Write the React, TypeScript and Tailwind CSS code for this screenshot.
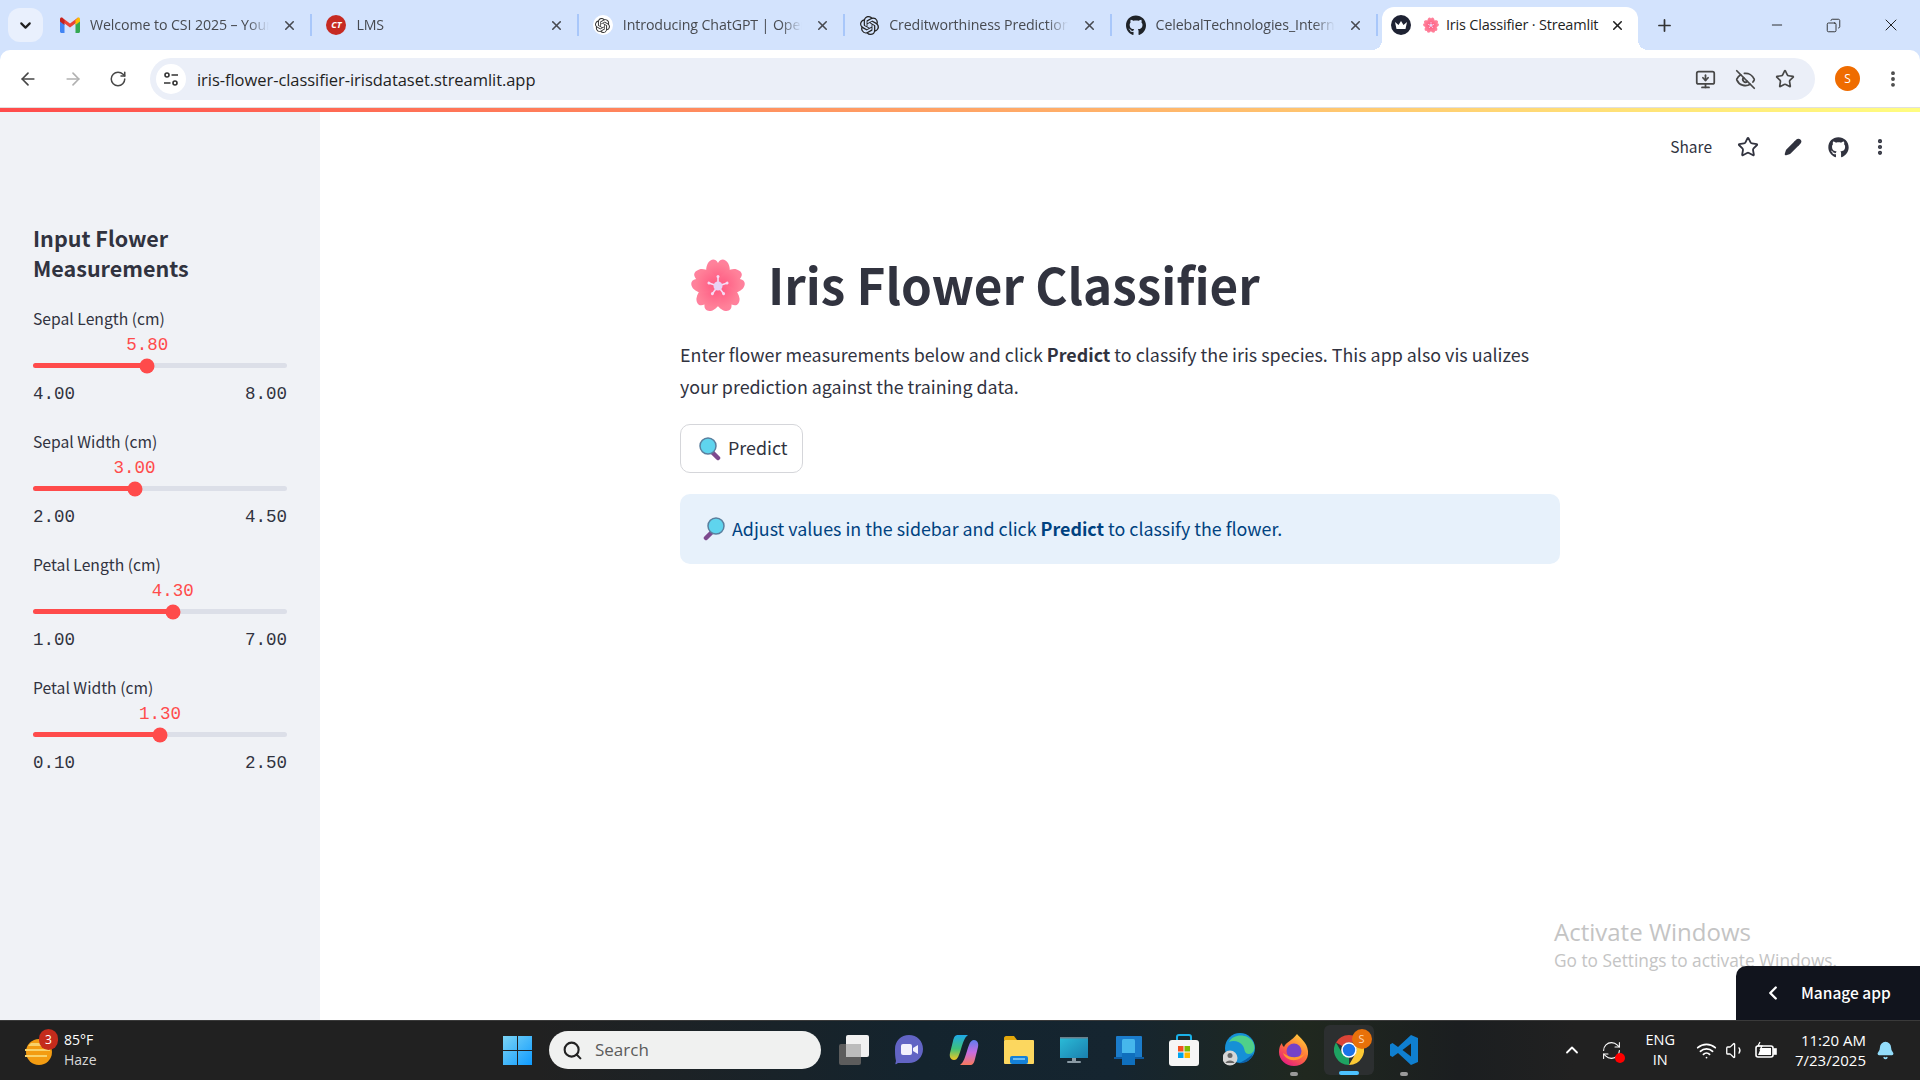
import React from 'react';
import { ChevronDown, X, ArrowLeft, ArrowRight, RotateCw, Star, Plus, Minus, EllipsisVertical, Pencil, EyeOff, MonitorDown, ChevronLeft, ChevronUp, Wifi, Volume1, Bell, RefreshCw, Search, Copy } from 'lucide-react';
import { FaGithub } from 'react-icons/fa';
import { SiOpenai } from 'react-icons/si';

const sans = 'font-["Noto_Sans_CJK_SC","Noto_Sans",sans-serif]';
const ui = 'font-["Open_Sans","Noto_Sans",sans-serif]';

const SLIDERS = [
  { label: 'Sepal Length (cm)', value: '5.80', min: '4.00', max: '8.00', pct: 45 },
  { label: 'Sepal Width (cm)', value: '3.00', min: '2.00', max: '4.50', pct: 40 },
  { label: 'Petal Length (cm)', value: '4.30', min: '1.00', max: '7.00', pct: 55 },
  { label: 'Petal Width (cm)', value: '1.30', min: '0.10', max: '2.50', pct: 50 },
];

function Flower({ size, id }: { size: number; id: string }) {
  return (
    <svg width={size} height={size} viewBox="0 0 54 54">
      <defs>
        <radialGradient id={id} gradientUnits="userSpaceOnUse" cx="27" cy="24" r="31">
          <stop offset="0" stopColor="#ff5a82" />
          <stop offset="0.6" stopColor="#ff8199" />
          <stop offset="0.9" stopColor="#ff7fa8" />
          <stop offset="1" stopColor="#ff6fd8" />
        </radialGradient>
      </defs>
      {[0, 72, 144, 216, 288].map((a) => (
        <path
          key={a}
          transform={`rotate(${a} 27 28)`}
          fill={`url(#${id})`}
          d="M27 30C18 25 12 14 17 5C20 1 24 0 27 5C30 0 34 1 37 5C42 14 36 25 27 30Z"
        />
      ))}
      <g stroke="#f6dcf6" strokeWidth="1.6" strokeLinecap="round">
        {[0, 72, 144, 216, 288].map((a) => (
          <g key={a} transform={`rotate(${a} 27 28)`}>
            <line x1="27" y1="28" x2="27" y2="19" />
            <circle cx="27" cy="18.5" r="1.5" fill="#f6dcf6" stroke="none" />
          </g>
        ))}
      </g>
      <circle cx="27" cy="28" r="4.5" fill="#e8d2f5" />
    </svg>
  );
}

function Magnifier({ flip }: { flip?: boolean }) {
  return (
    <svg width="22" height="24" viewBox="0 0 22 24" className={flip ? '-scale-x-100' : ''}>
      <path d="M13 15L19 21" stroke="#7d4a8e" strokeWidth="4.5" strokeLinecap="round" />
      <circle cx="9" cy="9" r="8" fill="#5fd4ee" stroke="#5a7f9e" strokeWidth="1.5" />
    </svg>
  );
}

function Gmail() {
  return (
    <svg width="20" height="16" viewBox="0 0 20 16">
      <path d="M0 3V14.5C0 15.3.7 16 1.5 16H4.5V7Z" fill="#4285f4" />
      <path d="M15.5 7V16H18.5C19.3 16 20 15.3 20 14.5V3Z" fill="#34a853" />
      <path d="M0 3L10 10.5L20 3L18 .5L10 6.5L2 .5Z" fill="#ea4335" />
      <path d="M15.5 3.2V8L20 4.5V2C20 .5 18.5 0 17.5 .9Z" fill="#fbbc04" />
      <path d="M4.5 3.2V8L0 4.5V2C0 .5 1.5 0 2.5 .9Z" fill="#c5221f" />
    </svg>
  );
}

function StreamlitCrown() {
  return (
    <svg width="20" height="20" viewBox="0 0 20 20">
      <circle cx="10" cy="10" r="10" fill="#1e2233" />
      <path d="M4 7L7.5 10L10 6L12.5 10L16 7L14.5 14H5.5Z" fill="#fff" />
    </svg>
  );
}

function Tab({ icon, title }: { icon: React.ReactNode; title: string }) {
  return (
    <div className="relative flex h-full w-[266.4px] shrink-0 items-center pl-[14px] pr-[15px]">
      <div className="flex w-5 shrink-0 justify-center">{icon}</div>
      <div className={`ml-[10px] w-[179px] overflow-hidden whitespace-nowrap text-[14.2px] tracking-[-0.1px] text-[#474a50] [mask-image:linear-gradient(90deg,#000_88%,transparent)] ${ui}`}>{title}</div>
      <X size={15} strokeWidth={2.5} className="ml-auto text-[#474a50]" />
      <div className="absolute right-0 top-[14px] h-[22px] w-[2px] bg-[#a8c7fa]" />
    </div>
  );
}

function TabStrip() {
  return (
    <div className="flex h-[50px] items-end bg-[#d3e3fd] pl-[8px]">
      <div className="mb-[8px] mr-[3px] flex h-[34px] w-[35px] items-center justify-center rounded-xl bg-[#e9f0fd]">
        <ChevronDown size={17} strokeWidth={3} className="text-[#1f1f1f]" />
      </div>
      <div className="flex h-[50px] items-center">
        <Tab icon={<Gmail />} title="Welcome to CSI 2025 – Your" />
        <Tab
          icon={<div className="flex h-5 w-5 items-center justify-center rounded-full bg-[#c62a22] text-[9px] font-bold italic text-white">CT</div>}
          title="LMS"
        />
        <Tab
          icon={<div className="flex h-5 w-5 items-center justify-center rounded-full bg-white"><SiOpenai size={15} className="text-[#333]" /></div>}
          title="Introducing ChatGPT | OpenAI"
        />
        <Tab icon={<SiOpenai size={19} className="text-[#222]" />} title="Creditworthiness Prediction" />
        <Tab icon={<FaGithub size={21} className="text-[#1f2328]" />} title="CelebalTechnologies_Internship" />
      </div>
      <div className="relative ml-[4px] flex h-[43px] w-[256px] items-center rounded-t-xl bg-white pb-[7px] pl-[9px] pr-[13px]">
        <span className="absolute bottom-0 left-[-10px] h-[10px] w-[10px] bg-[radial-gradient(circle_at_0_0,transparent_10px,white_10px)]" />
        <span className="absolute bottom-0 right-[-10px] h-[10px] w-[10px] bg-[radial-gradient(circle_at_100%_0,transparent_10px,white_10px)]" />
        <StreamlitCrown />
        <div className="ml-[12px]"><Flower size={16} id="tabflower" /></div>
        <span className={`ml-[7px] whitespace-nowrap text-[14.5px] tracking-[-0.2px] text-[#1f1f1f] ${ui}`}>Iris Classifier · Streamlit</span>
        <X size={15} strokeWidth={2.5} className="ml-auto text-[#1f1f1f]" />
      </div>
      <div className="flex h-[50px] w-[54px] items-center justify-center">
        <Plus size={19} strokeWidth={2.2} className="text-[#333]" />
      </div>
      <div className="ml-auto flex h-[50px] items-center pr-[1px]">
        <div className="flex w-[57px] justify-center"><Minus size={16} strokeWidth={1.4} className="text-[#222]" /></div>
        <div className="flex w-[57px] justify-center"><Copy size={15} strokeWidth={1.4} className="-scale-x-100 text-[#222]" /></div>
        <div className="flex w-[57px] justify-center"><X size={20} strokeWidth={1.2} className="text-[#222]" /></div>
      </div>
    </div>
  );
}

function Toolbar() {
  return (
    <div className="flex h-[57px] items-start rounded-t-[10px] bg-white pl-[5px] pt-[8px]">
      <div className="flex h-[42px] w-[45px] items-center justify-center"><ArrowLeft size={20} className="text-[#474747]" /></div>
      <div className="flex h-[42px] w-[45px] items-center justify-center"><ArrowRight size={20} className="text-[#b1b1b1]" /></div>
      <div className="flex h-[42px] w-[45px] items-center justify-center"><RotateCw size={18} className="text-[#474747]" /></div>
      <div className="ml-[10px] flex h-[42px] w-[1665px] items-center rounded-full bg-[#ebeff8] pl-[6px] pr-[20px]">
        <div className="flex h-[30px] w-[30px] items-center justify-center rounded-full bg-white">
          <svg width="16" height="16" viewBox="0 0 16 16" fill="none" stroke="#333" strokeWidth="1.6">
            <circle cx="4" cy="4" r="2" />
            <path d="M8.5 4H15M1 12H7.5" />
            <circle cx="12" cy="12" r="2" />
          </svg>
        </div>
        <span className={`ml-[11px] translate-y-[1px] text-[16.5px] tracking-[-0.05px] text-[#1f1f1f] ${ui}`}>iris-flower-classifier-irisdataset.streamlit.app</span>
        <div className="ml-auto flex items-center gap-[19px]">
          <MonitorDown size={21} className="text-[#474747]" />
          <EyeOff size={21} className="text-[#474747]" />
          <Star size={20} className="text-[#474747]" />
        </div>
      </div>
      <div className={`ml-[20px] flex h-[25px] w-[25px] translate-y-[8px] items-center justify-center rounded-full bg-[#ef6c00] text-[12px] text-white ${ui}`}>S</div>
      <EllipsisVertical size={20} strokeWidth={2.6} className="ml-[23px] translate-y-[11px] text-[#474747]" />
    </div>
  );
}

function RangeSlider({ label, value, min, max, pct }: (typeof SLIDERS)[number]) {
  return (
    <div className="mb-[24px]">
      <div className={`h-6 text-[15.7px] leading-6 text-[#31333f] ${sans}`}>{label}</div>
      <div className="relative mt-[2px] h-6">
        <span
          className='absolute -translate-x-1/2 font-["Liberation_Mono",monospace] text-[17.5px] leading-6 text-[#ff4b4b]'
          style={{ left: `${pct}%` }}
        >
          {value}
        </span>
      </div>
      <div className="relative mt-[6px] h-[5px] rounded-full bg-[#dcdfe8]">
        <div className="h-full rounded-full bg-[#ff4b4b]" style={{ width: `${pct}%` }} />
        <div
          className="absolute top-1/2 h-[15px] w-[15px] -translate-x-1/2 -translate-y-1/2 rounded-full bg-[#ff4b4b]"
          style={{ left: `${pct}%` }}
        />
      </div>
      <div className='mt-[14px] flex h-6 justify-between font-["Liberation_Mono",monospace] text-[17.5px] leading-6 text-[#31333f]'>
        <span>{min}</span>
        <span>{max}</span>
      </div>
    </div>
  );
}

function Sidebar() {
  return (
    <aside className="w-[320px] shrink-0 bg-[#f0f2f6] px-[33px] pt-[111px]">
      <h2 className={`mb-[24px] text-[21.5px] font-semibold leading-[30px] text-[#31333f] ${sans}`}>
        Input Flower<br />Measurements
      </h2>
      {SLIDERS.map((s) => (
        <RangeSlider key={s.label} {...s} />
      ))}
    </aside>
  );
}

function MainPanel() {
  return (
    <main className={`relative flex-1 bg-white ${sans}`}>
      <div className="flex h-[70px] items-center justify-end pr-[30px] text-[#31333f]">
        <span className="mr-[25px] text-[15.5px]">Share</span>
        <Star size={22} strokeWidth={2} className="mr-[25px]" />
        <Pencil size={18} fill="#31333f" className="mr-[26px]" />
        <FaGithub size={21} className="mr-[21px]" />
        <EllipsisVertical size={20} strokeWidth={3} />
      </div>
      <div className="ml-[360px] mt-[61px] w-[880px]">
        <div className="flex h-[84px] items-center pl-[11px]">
          <Flower size={54} id="titleflower" />
          <h1 className="ml-[23px] -translate-y-[1px] whitespace-nowrap text-[49.4px] font-bold leading-none text-[#31333f]">Iris Flower Classifier</h1>
        </div>
        <p className="mt-[11px] text-[17.87px] leading-[32px] text-[#31333f]">
          Enter flower measurements below and click <b className="font-semibold">Predict</b> to classify the iris species. This app also vis ualizes
          <br />
          your prediction against the training data.
        </p>
        <button className="mt-[22px] flex h-[49px] w-[123px] items-center rounded-[10px] border border-[#d5d6da] bg-white pl-[18px] text-[17.87px] text-[#31333f]">
          <Magnifier />
          <span className="ml-[7px] -translate-y-[1px]">Predict</span>
        </button>
        <div className="mt-[21px] flex h-[70px] items-center rounded-[10px] bg-[#e7f1fb] pl-[23px] text-[17.85px] text-[#004280]">
          <Magnifier flip />
          <span className="ml-[7px] -translate-y-[1.5px]">
            Adjust values in the sidebar and click <b className="font-semibold">Predict</b> to classify the flower.
          </span>
        </div>
      </div>
      <div className={`absolute left-[1234px] top-[804px] text-[#c4c4c4] ${ui}`}>
        <div className="text-[24px] leading-[32px]">Activate Windows</div>
        <div className="text-[17.3px] leading-[26px]">Go to Settings to activate Windows.</div>
      </div>
      <div className="absolute bottom-0 right-0 flex h-[54px] w-[184px] items-center rounded-tl-[10px] bg-[#11141d] pl-[26px] text-[15.5px] font-medium text-white">
        <ChevronLeft size={22} strokeWidth={2.6} />
        <span className="ml-[17px]">Manage app</span>
      </div>
    </main>
  );
}

function Teams() {
  return (
    <svg width="30" height="32" viewBox="0 0 30 32">
      <path d="M15 1C23 1 29 7 29 15C29 23 23 29 15 29H4C1 31 1 31 2 27C1 23 1 19 1 15C1 7 7 1 15 1Z" fill="#6264c4" />
      <rect x="7" y="10" width="11" height="11" rx="2" fill="#f2f0fc" />
      <path d="M19 14L24 11V20L19 17Z" fill="#f2f0fc" />
    </svg>
  );
}

function CopilotIcon() {
  return (
    <svg width="30" height="32" viewBox="0 0 30 32">
      <defs>
        <linearGradient id="cpa" x1="0" y1="0" x2="0" y2="1">
          <stop offset="0" stopColor="#1fa9e8" />
          <stop offset="0.55" stopColor="#3fc27a" />
          <stop offset="1" stopColor="#f3c622" />
        </linearGradient>
        <linearGradient id="cpb" x1="0" y1="0" x2="0" y2="1">
          <stop offset="0" stopColor="#5f7df0" />
          <stop offset="0.5" stopColor="#c86ce0" />
          <stop offset="1" stopColor="#f7795c" />
        </linearGradient>
      </defs>
      <path d="M9 1H19C15 4 14 9 12 15C10 21 9 26 5 26C2 26 0 23 1 19L4 7C5 3 6 1 9 1Z" fill="url(#cpa)" />
      <path d="M21 31H11C15 28 16 23 18 17C20 11 21 6 25 6C28 6 30 9 29 13L26 25C25 29 24 31 21 31Z" fill="url(#cpb)" />
    </svg>
  );
}

function Folder() {
  return (
    <svg width="30" height="30" viewBox="0 0 30 30">
      <path d="M0 3C0 2 1 1 2 1H10L13 5H0Z" fill="#e2a70b" />
      <rect y="5" width="30" height="24" rx="1" fill="#fcd75f" />
      <rect x="6" y="21" width="18" height="8" rx="2" fill="#1581d8" />
      <rect x="9" y="23" width="12" height="2" fill="#71bdf0" />
    </svg>
  );
}

function Monitor() {
  return (
    <svg width="28" height="28" viewBox="0 0 28 28">
      <defs>
        <linearGradient id="mon" x1="0" y1="0" x2="1" y2="1">
          <stop offset="0" stopColor="#2bbcd8" />
          <stop offset="1" stopColor="#1a7fae" />
        </linearGradient>
      </defs>
      <rect y="1" width="28" height="21" fill="url(#mon)" />
      <rect y="1" width="28" height="1.5" fill="#6b7f8a" />
      <rect x="12" y="22" width="4" height="3" fill="#8a9aa4" />
      <rect x="7" y="25" width="14" height="2" rx="1" fill="#8a9aa4" />
    </svg>
  );
}

function PhoneLink() {
  return (
    <svg width="30" height="30" viewBox="0 0 30 30">
      <rect x="2" y="1" width="26" height="22" rx="1" fill="#1b7ccb" />
      <rect y="22" width="30" height="2" fill="#0e5a9e" />
      <rect x="8" y="4" width="13" height="26" rx="1.5" fill="#46b7ec" />
      <rect x="8" y="18" width="13" height="12" fill="#0f6fbd" />
    </svg>
  );
}

function StoreIcon() {
  return (
    <svg width="30" height="32" viewBox="0 0 30 32">
      <path d="M8 6V3C8 2 9 1 10 1H20C21 1 22 2 22 3V6" fill="none" stroke="#1ab1e8" strokeWidth="2" />
      <rect y="6" width="30" height="26" rx="3" fill="#f6f6f6" />
      <rect x="9" y="12" width="5.5" height="5.5" fill="#f25022" />
      <rect x="15.5" y="12" width="5.5" height="5.5" fill="#7fba00" />
      <rect x="9" y="18.5" width="5.5" height="5.5" fill="#00a4ef" />
      <rect x="15.5" y="18.5" width="5.5" height="5.5" fill="#ffb900" />
    </svg>
  );
}

function EdgeIcon() {
  return (
    <svg width="32" height="34" viewBox="0 0 32 34">
      <circle cx="17" cy="15" r="15" fill="#1690d6" />
      <path d="M6 9C10 1 24 0 30 9C33 15 31 21 26 21C21 21 22 16 20 13C17 8 10 7 6 9Z" fill="#4fd08a" />
      <path d="M30 21C28 28 21 31 16 30C23 27 26 24 30 21Z" fill="#0c5fa8" />
      <circle cx="7" cy="25" r="7.5" fill="#d6d6d6" />
      <circle cx="7" cy="22.5" r="2.5" fill="#666" />
      <path d="M2.5 30C3 26.5 11 26.5 11.5 30Z" fill="#666" />
    </svg>
  );
}

function FirefoxIcon() {
  return (
    <svg width="30" height="34" viewBox="0 0 30 34">
      <defs>
        <linearGradient id="ffa" x1="0.8" y1="0" x2="0.2" y2="1">
          <stop offset="0" stopColor="#ffd23a" />
          <stop offset="0.5" stopColor="#ff7139" />
          <stop offset="1" stopColor="#e31587" />
        </linearGradient>
      </defs>
      <path d="M18 1C21 5 28 9 29 18C30 27 23 33 15 33C7 33 0 27 0 19C0 15 1 12 3 10C3 12 4 13 5 14C7 9 13 8 18 1Z" fill="url(#ffa)" />
      <circle cx="15" cy="18" r="7.5" fill="#7542c8" />
      <path d="M4 20C7 29 21 30 26 20C22 25 11 26 4 20Z" fill="#ff9a2e" />
    </svg>
  );
}

function ChromeIcon() {
  return (
    <svg width="30" height="30" viewBox="0 0 30 30">
      <path d="M15 0A15 15 0 0 1 28 7.5H15A7.5 7.5 0 0 0 8.5 11.25L2 7.5A15 15 0 0 1 15 0Z" fill="#db4437" />
      <path d="M28 7.5A15 15 0 0 1 15 30L21.5 18.75A7.5 7.5 0 0 0 21.5 11.25Z" fill="#fcc934" />
      <path d="M2 7.5L8.5 18.75A7.5 7.5 0 0 0 15 22.5L15 30A15 15 0 0 1 2 7.5Z" fill="#1ea362" />
      <circle cx="15" cy="15" r="7.8" fill="#fff" />
      <circle cx="15" cy="15" r="6.2" fill="#1a73e8" />
    </svg>
  );
}

function VsCodeIcon() {
  return (
    <svg width="30" height="32" viewBox="0 0 30 32">
      <path d="M22 1L9 13L3.5 9L1 10.5V21.5L3.5 23L9 19L22 31L29 28V4ZM22 9.5V22.5L13.5 16Z" fill="#0f7fd0" />
    </svg>
  );
}

function TaskItem({ children, dot, active }: { children: React.ReactNode; dot?: boolean; active?: boolean }) {
  return (
    <div className={`relative mx-[2.5px] flex h-[50px] w-[50px] items-center justify-center rounded-md ${active ? 'bg-[#2c2f30]' : ''}`}>
      {children}
      {dot && <div className="absolute bottom-[-1px] h-[4px] w-[8px] rounded-full bg-[#9a9a9a]" />}
      {active && <div className="absolute bottom-0 h-[4px] w-[20px] rounded-full bg-[#4cc2ff]" />}
    </div>
  );
}

function Taskbar() {
  return (
    <div className={`flex h-[60px] items-center border-t border-[#3a3a3a] bg-[linear-gradient(90deg,#212121_0%,#212121_28%,#14242e_48%,#152530_58%,#20281f_68%,#1b1e20_76%,#212121_82%)] pb-[1px] text-white ${ui}`}>
      <div className="flex w-[503px] shrink-0 items-center pl-[24px]">
        <div className="relative h-[40px] w-[40px]">
          <svg width="30" height="32" viewBox="0 0 30 32" className="mt-[6px]">
            <circle cx="15" cy="16" r="13" fill="#f39c12" />
            <path d="M4 10H24V7H7ZM1 15H26V13H1ZM1 21H23V19H1Z" fill="#f8d26a" />
          </svg>
          <div className="absolute left-[15px] top-[-1px] flex h-[21px] w-[19px] items-center justify-center rounded-full bg-[#c42b1c] text-[12px]">3</div>
        </div>
        <div className="text-[14px] leading-[20px]">
          <div>85°F</div>
          <div className="text-[#d8d8d8]">Haze</div>
        </div>
      </div>
      <svg width="29" height="29" viewBox="0 0 29 29" className="shrink-0">
        <defs>
          <linearGradient id="win" x1="0" y1="0" x2="1" y2="1">
            <stop offset="0" stopColor="#7bd4f5" />
            <stop offset="1" stopColor="#0f9bff" />
          </linearGradient>
        </defs>
        <path d="M0 0H14V14H0ZM15 0H29V14H15ZM0 15H14V29H0ZM15 15H29V29H15Z" fill="url(#win)" />
      </svg>
      <div className="ml-[17px] flex h-[38px] w-[272px] shrink-0 items-center rounded-full bg-[#f0f1f0] pl-[13px] text-[#5b5b5b]">
        <Search size={21} strokeWidth={2.4} className="text-[#222]" />
        <span className="ml-[12px] text-[17px]">Search</span>
      </div>
      <div className="ml-[5px] flex items-center">
        <TaskItem>
          <svg width="30" height="30" viewBox="0 0 30 30">
            <rect y="9" width="22" height="21" rx="2" fill="#5c5c5c" />
            <rect x="7" width="23" height="22" rx="2" fill="#f1f1f1" />
            <rect x="7" y="9" width="15" height="13" fill="#bcbcbc" />
          </svg>
        </TaskItem>
        <TaskItem><Teams /></TaskItem>
        <TaskItem><CopilotIcon /></TaskItem>
        <TaskItem><Folder /></TaskItem>
        <TaskItem><Monitor /></TaskItem>
        <TaskItem><PhoneLink /></TaskItem>
        <TaskItem><StoreIcon /></TaskItem>
        <TaskItem><EdgeIcon /></TaskItem>
        <TaskItem dot><FirefoxIcon /></TaskItem>
        <TaskItem active>
          <ChromeIcon />
          <div className="absolute right-[2px] top-[4px] flex h-[20px] w-[20px] items-center justify-center rounded-full bg-[#e8710a] text-[11px] text-[#ffd9b8]">S</div>
        </TaskItem>
        <TaskItem dot><VsCodeIcon /></TaskItem>
      </div>
      <div className="ml-auto flex items-center pr-[25px]">
        <ChevronUp size={20} strokeWidth={2.2} className="mr-[19px]" />
        <div className="relative mr-[23px]">
          <RefreshCw size={21} strokeWidth={1.2} />
          <div className="absolute bottom-[-2px] right-[-3px] h-[10px] w-[10px] rounded-full bg-[#ff0000]" />
        </div>
        <div className="mr-[21px] text-center text-[14.5px] leading-[20px]">
          <div>ENG</div>
          <div>IN</div>
        </div>
        <Wifi size={21} className="mr-[8px]" />
        <Volume1 size={21} strokeWidth={1.5} className="mr-[9px]" />
        <svg width="22" height="18" viewBox="0 0 22 18" className="mr-[18px]" fill="none" stroke="#fff" strokeWidth="1.6">
          <rect x="1" y="5" width="17" height="11" rx="2" />
          <rect x="19" y="8" width="2" height="5" fill="#fff" />
          <path d="M3 14L6 7H16V14Z" fill="#fff" stroke="none" />
          <path d="M5 1L3 5H7L5 9" strokeWidth="1.2" />
        </svg>
        <div className="text-right text-[15px] leading-[20px]">
          <div>11:20 AM</div>
          <div>7/23/2025</div>
        </div>
        <Bell size={19} fill="#93ddfb" className="ml-[10px] text-[#93ddfb]" />
      </div>
    </div>
  );
}

export default function App() {
  return (
    <div className="flex h-screen w-screen flex-col overflow-hidden bg-[#d3e3fd]">
      <TabStrip />
      <Toolbar />
      <div className="h-[1px] bg-[#e0e0e0]" />
      <div className="h-[4px] bg-[linear-gradient(90deg,#ff4b4b,#fffd80)]" />
      <div className="flex min-h-0 flex-1">
        <Sidebar />
        <MainPanel />
      </div>
      <Taskbar />
    </div>
  );
}
